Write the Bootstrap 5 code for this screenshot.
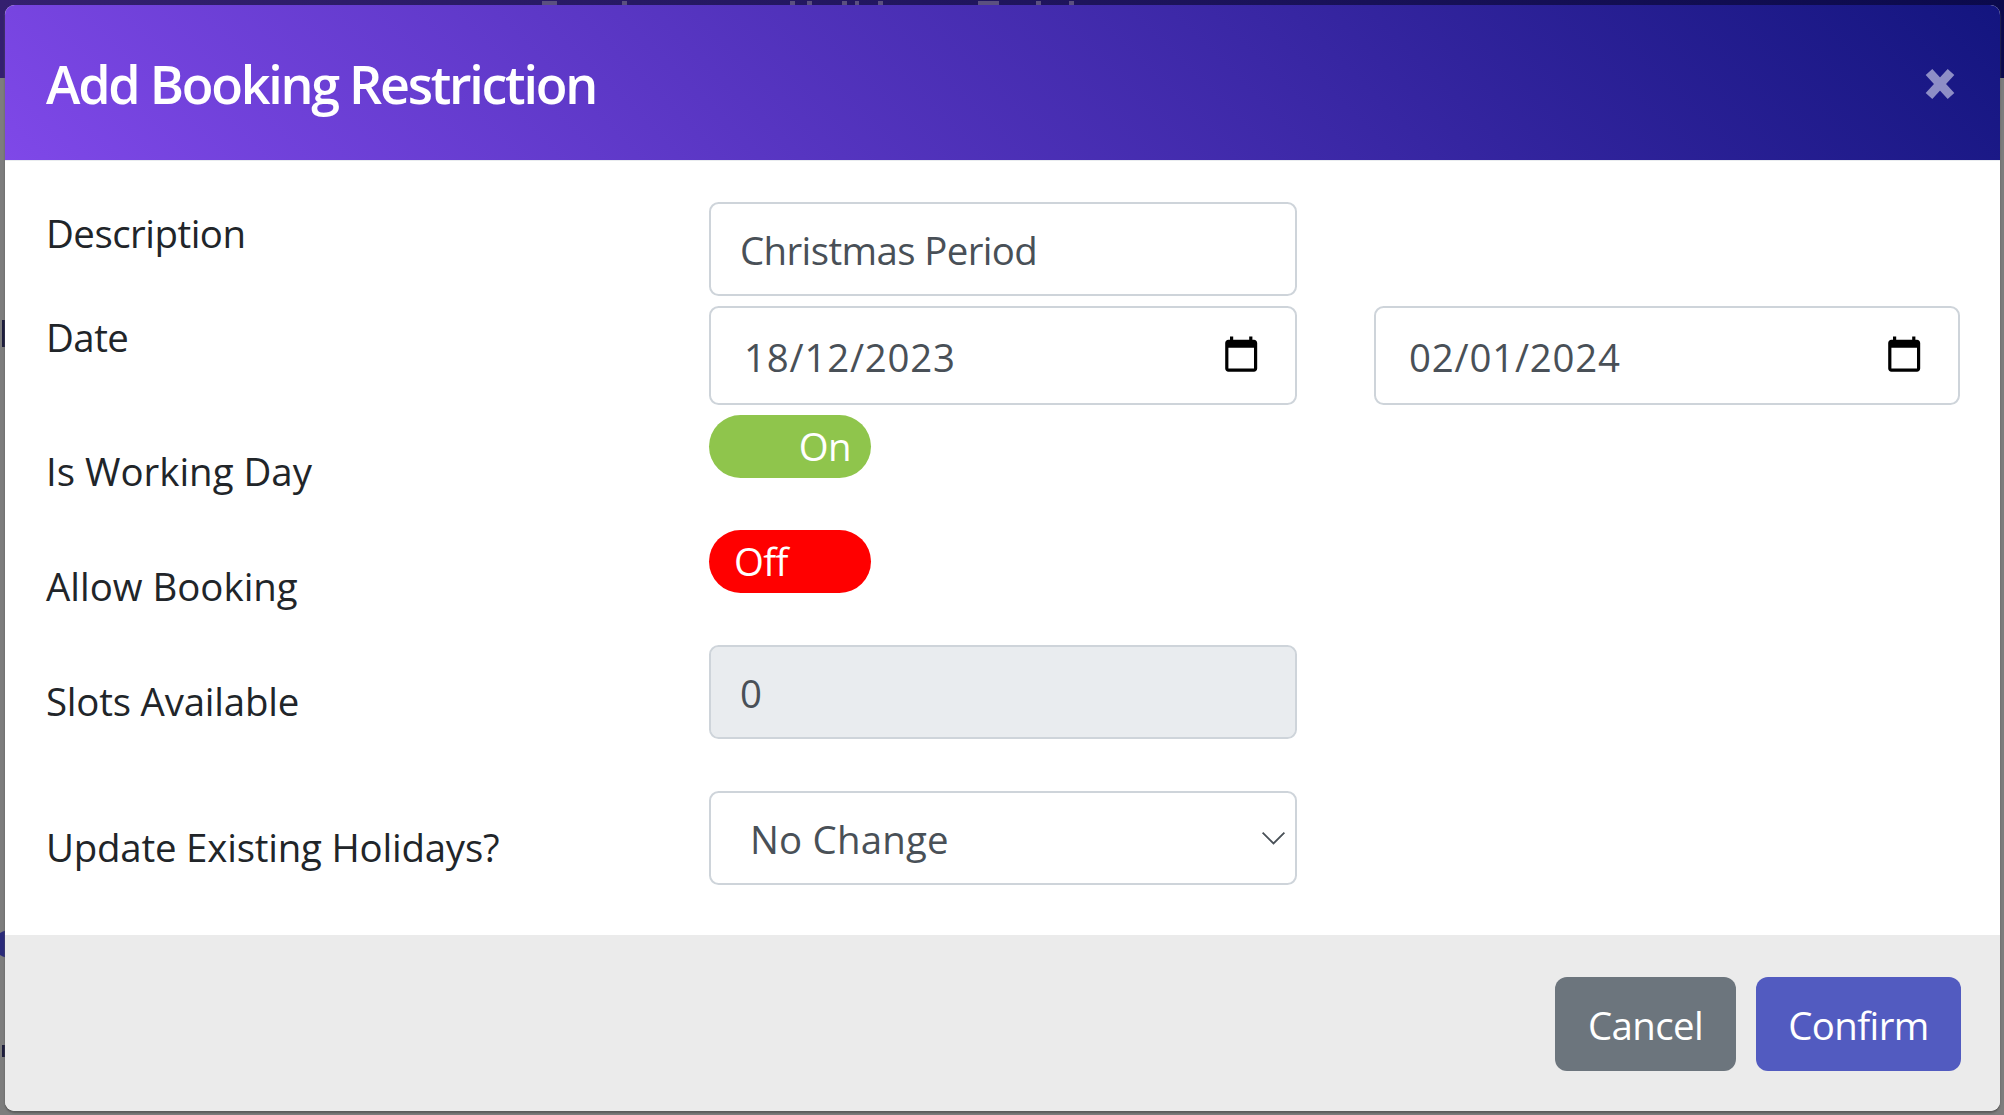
<!DOCTYPE html>
<html lang="en">
<head>
<meta charset="utf-8">
<title>Add Booking Restriction</title>
<link href="https://cdn.jsdelivr.net/npm/bootstrap@5.3.0/dist/css/bootstrap.min.css" rel="stylesheet">
<style>
html,body{height:100%}
body{--bk-blob:linear-gradient(#5b5080,#5b5080);--bk-ink:linear-gradient(#1c1c3c,#1c1c3c);margin:0;padding:5px 4px 4px 5px;overflow:hidden;font-family:"Open Sans","Liberation Sans",sans-serif;font-size:38.4px;color:#212529;
background:
var(--bk-blob) 542px 1px/15px 4px no-repeat,var(--bk-blob) 622px 1px/5px 4px no-repeat,var(--bk-blob) 790px 1px/5px 4px no-repeat,var(--bk-blob) 807px 1px/5px 4px no-repeat,var(--bk-blob) 842px 1px/5px 4px no-repeat,var(--bk-blob) 855px 1px/4px 4px no-repeat,var(--bk-blob) 878px 1px/5px 4px no-repeat,var(--bk-blob) 978px 1px/21px 4px no-repeat,var(--bk-blob) 1036px 1px/5px 4px no-repeat,var(--bk-blob) 1069px 1px/5px 4px no-repeat,
var(--bk-ink) 2px 320px/3px 27px no-repeat,var(--bk-ink) 2px 1045px/3px 12px no-repeat,
linear-gradient(to right,#34206f,#0b0a4c) 0 0/100% 78px no-repeat,radial-gradient(circle at 8px 14px,#2a2a7a 13px,transparent 14px) 0 930px/5px 28px no-repeat,#7d7d7d}
.bk-modal{background:#fff;border:0;border-radius:9.6px;height:1106px;overflow:hidden;box-shadow:0 2px 2px #5a5a5a}
.bk-head{height:156px;padding:0 41px;background:linear-gradient(45deg,#7f48e8,#13157f);border-bottom:1px solid #e9ecef;border-radius:0}
.bk-title{font-size:52px;font-weight:600;color:#fff;letter-spacing:-2.25px;line-height:1;margin:3px 0 0}
.bk-close{background:none;border:0;padding:0;margin:3px 4px 0 0;line-height:0}
.bk-body{padding:41px 40px 0 41px;flex:1 1 auto}
.bk-row{--bs-gutter-x:75px}
.bk-row+.bk-row{margin-top:10px}
.bk-row.bk-gap{margin-top:30px}
.bk-row.bk-wide{margin-top:52px}
.bk-label{margin:0;font-size:38.4px;line-height:58px;letter-spacing:-.2px;display:block;padding-top:2px}
.bk-label.bk-tight{letter-spacing:-.5px}
.bk-label.bk-low{padding-top:27px}
.bk-label.bk-loose{letter-spacing:0}
.bk-ctl.form-control,.bk-ctl.form-select{height:94px;font-size:38.4px;color:#495057;border:2.4px solid #ced4da;border-radius:9.6px;letter-spacing:-.6px;padding:2px 29px 0}
.bk-ctl:disabled{background-color:#e9ecef}
.bk-date{position:relative}
.bk-date.bk-end{margin-left:2px}
.bk-date .bk-ctl.form-control{height:99px;padding:3px 60px 0 33px;letter-spacing:.8px}
.bk-date svg{position:absolute;right:37px;top:29px}
.bk-ctl.form-select{padding-left:39px;padding-top:4px;letter-spacing:.2px;--bs-form-select-bg-img:url("data:image/svg+xml,%3csvg xmlns='http://www.w3.org/2000/svg' viewBox='0 0 16 12'%3e%3cpath fill='none' stroke='%23495057' stroke-width='1' d='m2 3 6 6 6-6'/%3e%3c/svg%3e");background-size:29px 22px;background-position:right 7px center}
.bk-pill{width:162px;height:63px;color:#fff;font-size:38.4px;letter-spacing:-.6px;line-height:1}
.bk-on{background:#8fc54c;justify-content:flex-end;padding-right:20px}
.bk-off{background:#f00;justify-content:flex-start;padding-left:25px}
.bk-foot{height:176px;background:#ebebeb;padding:2px 39px 0 0;gap:20px;border:0;border-radius:0}
.bk-btn.btn{height:94px;font-size:38.4px;color:#fff;border:0;border-radius:12px;padding:4px 32px 0;letter-spacing:-.6px;margin:0}
.bk-cancel.btn{width:181px;background:#6c757d}
.bk-confirm.btn{width:205px;background:#525bc0}
</style>
</head>
<body>
<div class="modal-content bk-modal d-flex flex-column">
  <div class="modal-header bk-head d-flex align-items-center justify-content-between">
    <h5 class="modal-title bk-title">Add Booking Restriction</h5>
    <button type="button" class="bk-close" aria-label="Close">
      <svg width="30" height="32" viewBox="0 0 30 32"><path d="M4 4 26 28M26 4 4 28" stroke="#8e8ec6" stroke-width="9" fill="none"/></svg>
    </button>
  </div>
  <form class="bk-body">
    <div class="row bk-row">
      <div class="col-4"><label class="bk-label bk-tight" for="f1">Description</label></div>
      <div class="col-4"><input id="f1" class="form-control bk-ctl" type="text" value="Christmas Period"></div>
    </div>
    <div class="row bk-row">
      <div class="col-4"><label class="bk-label bk-tight" for="f2">Date</label></div>
      <div class="col-4"><div class="bk-date"><input id="f2" class="form-control bk-ctl" type="text" value="18/12/2023">
        <svg width="38.4" height="38.4" viewBox="0 0 24 24"><path d="M20 3h-1V1h-2v2H7V1H5v2H4c-1.1 0-2 .9-2 2v16c0 1.1.9 2 2 2h16c1.1 0 2-.9 2-2V5c0-1.1-.9-2-2-2zm0 18H4V8h16v13z"/></svg></div></div>
      <div class="col-4"><div class="bk-date bk-end"><input class="form-control bk-ctl" type="text" aria-label="End date" value="02/01/2024">
        <svg width="38.4" height="38.4" viewBox="0 0 24 24"><path d="M20 3h-1V1h-2v2H7V1H5v2H4c-1.1 0-2 .9-2 2v16c0 1.1.9 2 2 2h16c1.1 0 2-.9 2-2V5c0-1.1-.9-2-2-2zm0 18H4V8h16v13z"/></svg></div></div>
    </div>
    <div class="row bk-row">
      <div class="col-4"><span class="bk-label bk-low bk-loose">Is Working Day</span></div>
      <div class="col-4"><div class="bk-pill bk-on rounded-pill d-flex align-items-center">On</div></div>
    </div>
    <div class="row bk-row bk-gap">
      <div class="col-4"><span class="bk-label bk-low bk-loose">Allow Booking</span></div>
      <div class="col-4"><div class="bk-pill bk-off rounded-pill d-flex align-items-center">Off</div></div>
    </div>
    <div class="row bk-row bk-gap">
      <div class="col-4"><label class="bk-label bk-low" for="f3">Slots Available</label></div>
      <div class="col-4"><input id="f3" class="form-control bk-ctl" type="text" value="0" disabled></div>
    </div>
    <div class="row bk-row bk-wide">
      <div class="col-4"><label class="bk-label bk-low" for="f4">Update Existing Holidays?</label></div>
      <div class="col-4"><select id="f4" class="form-select bk-ctl"><option>No Change</option></select></div>
    </div>
  </form>
  <div class="modal-footer bk-foot d-flex align-items-center justify-content-end">
    <button type="button" class="btn bk-btn bk-cancel">Cancel</button>
    <button type="button" class="btn bk-btn bk-confirm">Confirm</button>
  </div>
</div>
<script src="https://cdn.jsdelivr.net/npm/bootstrap@5.3.0/dist/js/bootstrap.bundle.min.js"></script>
</body>
</html>
